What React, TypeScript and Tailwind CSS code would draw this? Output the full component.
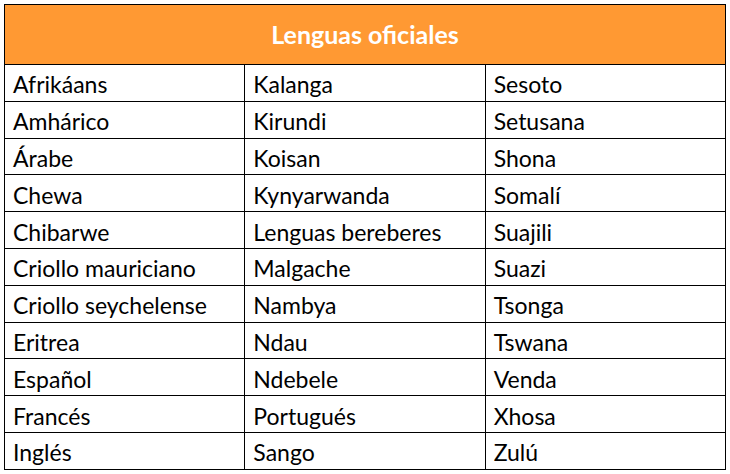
import React from "react";

const rows: [string, string, string][] = [
  ["Afrikáans", "Kalanga", "Sesoto"],
  ["Amhárico", "Kirundi", "Setusana"],
  ["Árabe", "Koisan", "Shona"],
  ["Chewa", "Kynyarwanda", "Somalí"],
  ["Chibarwe", "Lenguas bereberes", "Suajili"],
  ["Criollo mauriciano", "Malgache", "Suazi"],
  ["Criollo seychelense", "Nambya", "Tsonga"],
  ["Eritrea", "Ndau", "Tswana"],
  ["Español", "Ndebele", "Venda"],
  ["Francés", "Portugués", "Xhosa"],
  ["Inglés", "Sango", "Zulú"],
];

export default function App() {
  return (
    <div className="w-[730px] h-[474px] bg-white pt-[4px] pl-[4px] font-['Lato',sans-serif] text-black">
      <table className="w-[722px] border-collapse border border-black table-fixed">
        <thead>
          <tr className="h-[60px]">
            <th
              colSpan={3}
              className="bg-[#ff9933] border border-black text-white text-[25px] font-bold text-center"
            >
              Lenguas oficiales
            </th>
          </tr>
        </thead>
        <tbody>
          {rows.map((r) => (
            <tr key={r[0]} className="h-[36.8px]">
              {r.map((c) => (
                <td key={c} className="border border-black pl-[8px] pt-[4px] text-[23px] leading-none">
                  {c}
                </td>
              ))}
            </tr>
          ))}
        </tbody>
      </table>
    </div>
  );
}
